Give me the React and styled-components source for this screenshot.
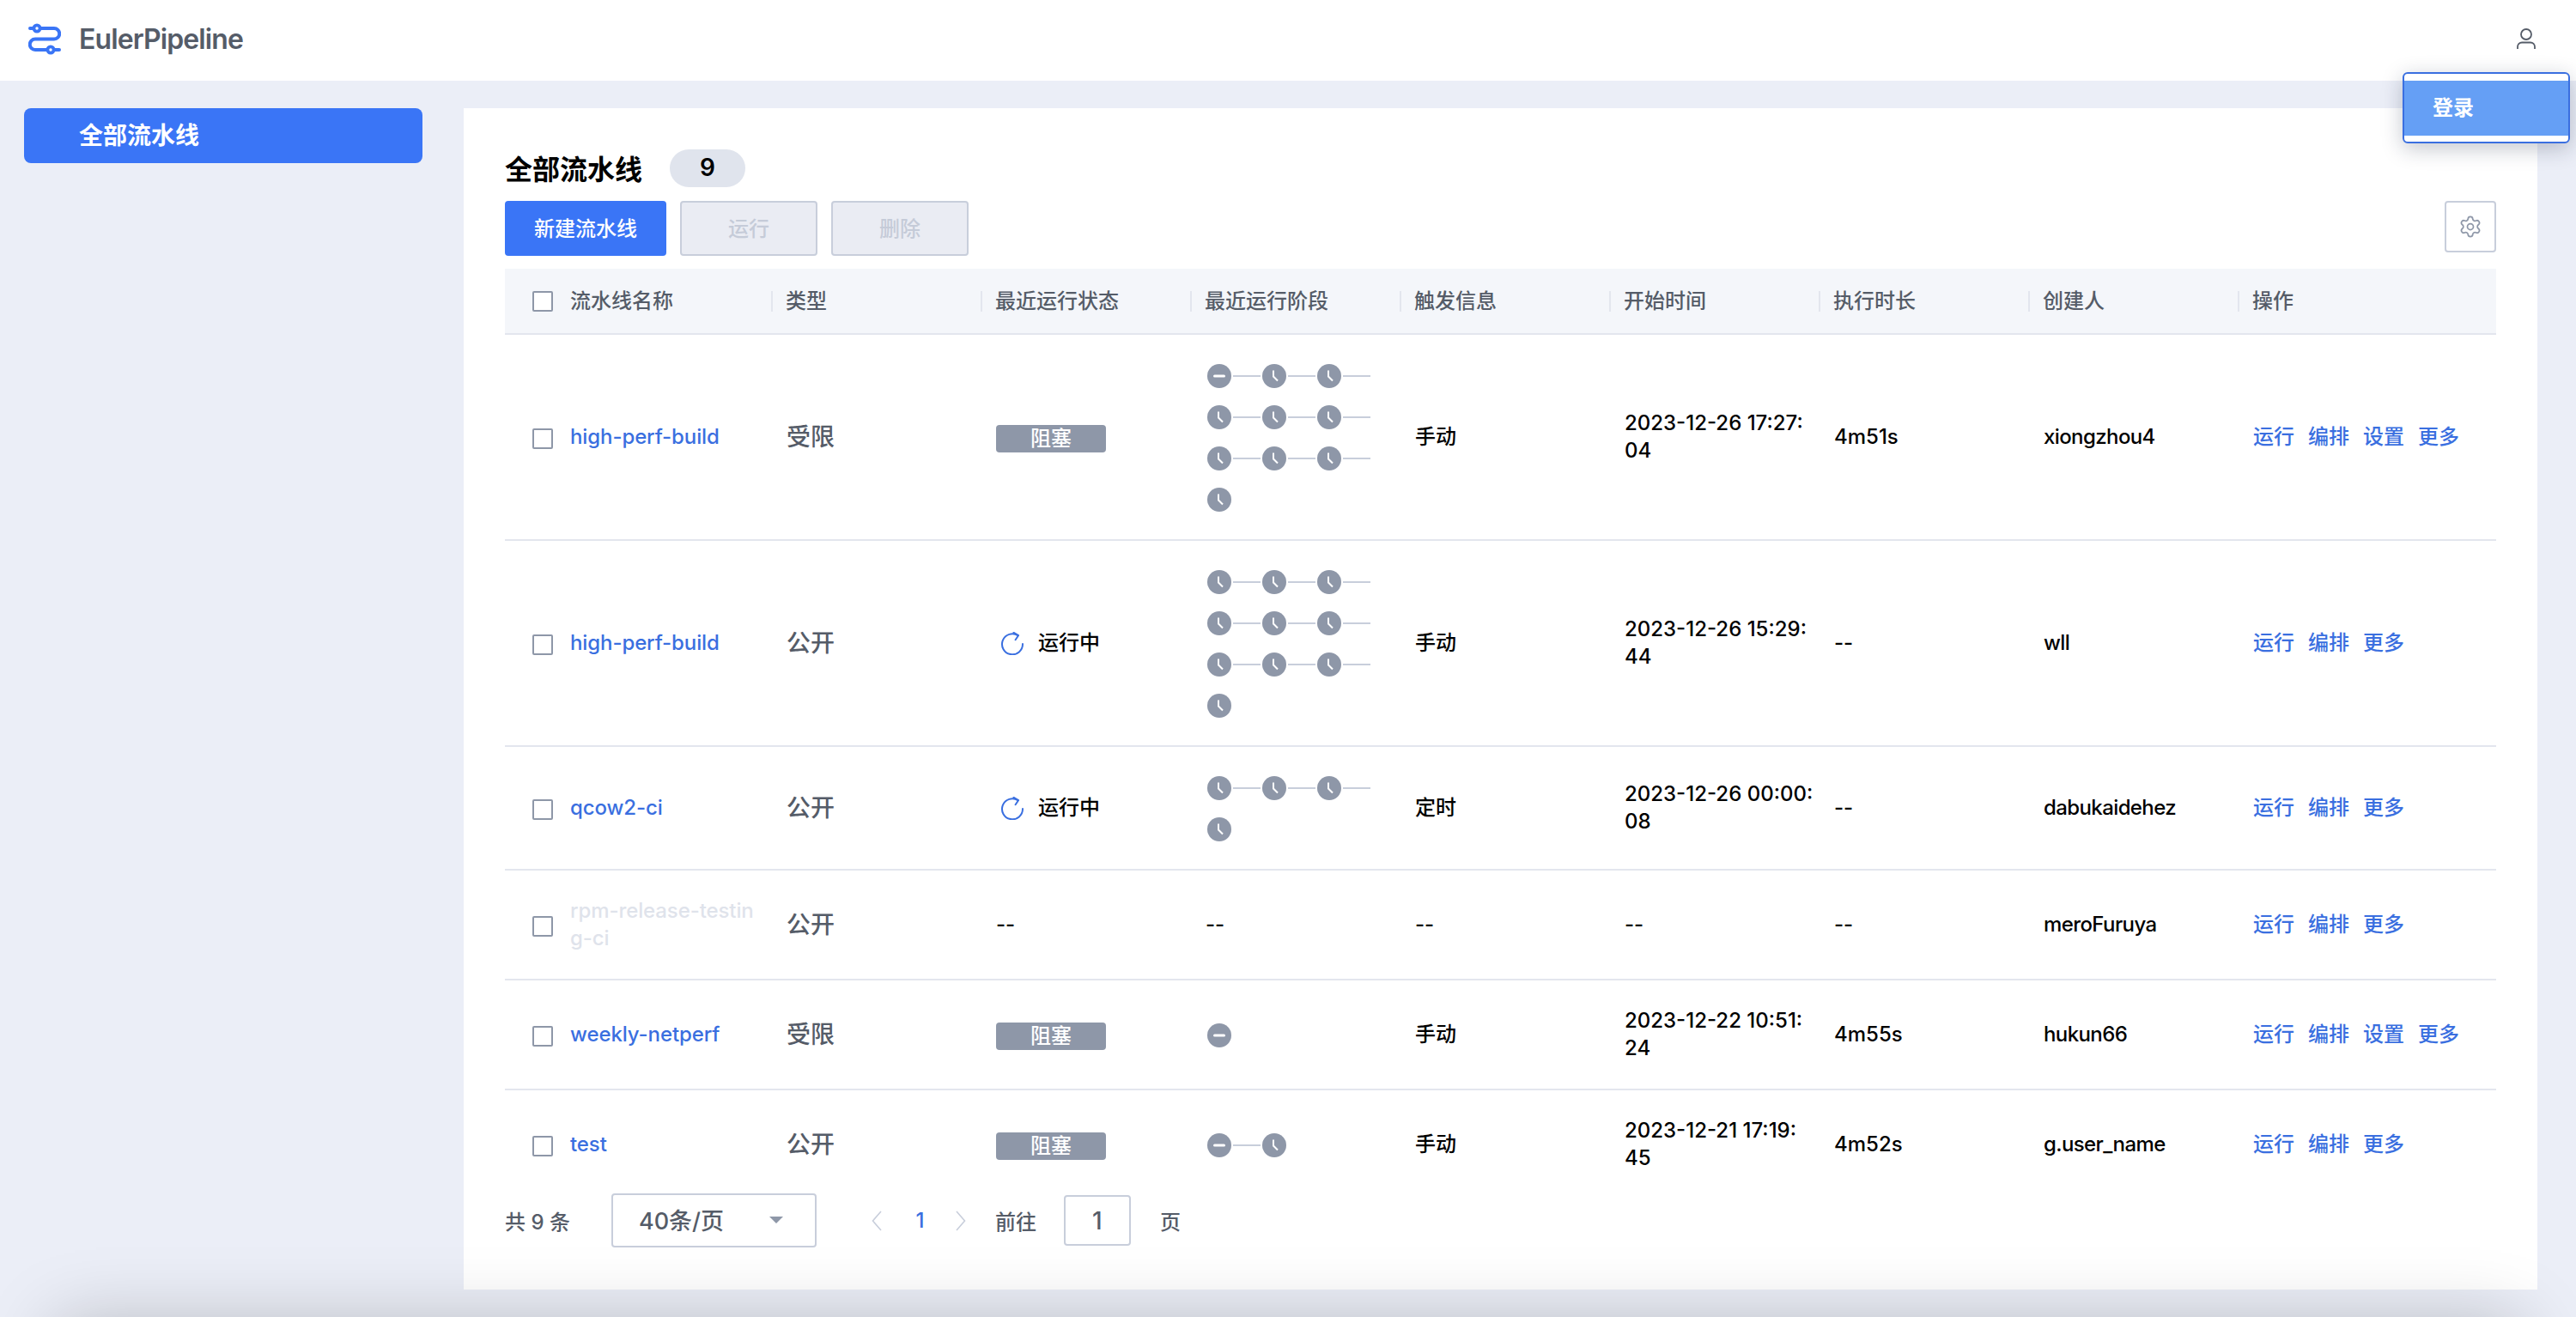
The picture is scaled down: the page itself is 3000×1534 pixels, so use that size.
import React from 'react';
import styled, { createGlobalStyle } from 'styled-components';
import { Settings } from 'lucide-react';

const Global = createGlobalStyle`
  html, body {
    margin: 0;
    height: 100%;
    overflow: hidden;
    background: #ebeef7;
    font-family: Inter, "Noto Sans CJK SC", "Noto Sans", sans-serif;
  }
  * { box-sizing: border-box; }
`;

const Page = styled.div`
  position: relative;
  height: 1534px;
  overflow: hidden;
`;

const Header = styled.header`
  height: 94px;
  background: #fff;
  display: flex;
  align-items: center;
  justify-content: space-between;
  padding: 0 47px 3px 33px;
`;

const Brand = styled.div`
  display: flex;
  align-items: center;
  gap: 21px;
  font-size: 32px;
  font-weight: 600;
  color: #555c68;
  letter-spacing: -0.9px;
`;

const Body = styled.div`
  display: flex;
  padding: 32px 45px 0 28px;
`;

const Sidebar = styled.nav`
  width: 464px;
  margin-right: 48px;
`;

const SideItem = styled.div`
  height: 64px;
  display: flex;
  align-items: center;
  padding: 0 0 5px 64px;
  border-radius: 8px;
  background: #3a75f6;
  color: #fff;
  font-size: 28px;
  font-weight: 700;
`;

const Card = styled.main`
  width: 2415px;
  height: 1376px;
  background: #fff;
  padding: 48px 48px 0;
`;

const TitleRow = styled.div`
  display: flex;
  align-items: center;
  height: 44px;
  margin-bottom: 16px;
`;

const Title = styled.h1`
  margin: 0 32px 0 0;
  padding-bottom: 3px;
  font-size: 32px;
  font-weight: 700;
  color: #000;
`;

const Count = styled.span`
  width: 88px;
  height: 44px;
  border-radius: 22px;
  background: #e0e4ed;
  display: flex;
  align-items: center;
  justify-content: center;
  padding-bottom: 2px;
  font-size: 28px;
  font-weight: 600;
  color: #000;
`;

const Toolbar = styled.div`
  display: flex;
  align-items: flex-start;
  gap: 16px;
  margin-bottom: 15px;
`;

const Button = styled.button`
  height: 64px;
  width: ${p => (p.$primary ? 188 : 160)}px;
  border-radius: 4px;
  border: ${p => (p.$primary ? 'none' : '2px solid #c8cedb')};
  background: ${p => (p.$primary ? '#3a75f6' : '#eaecf3')};
  color: ${p => (p.$primary ? '#fff' : '#c5cbd8')};
  font: 500 24px Inter, "Noto Sans CJK SC", sans-serif;
  padding: 0 0 3px;
`;

const GearButton = styled.button`
  margin-left: auto;
  width: 60px;
  height: 60px;
  border: 2px solid #c8cedb;
  border-radius: 4px;
  background: #fff;
  display: flex;
  align-items: center;
  justify-content: center;
  padding: 0;
`;

const TableClip = styled.div`
  height: 1057px;
  overflow: hidden;
`;

const columns = '310px 244px 244px 244px 244px 244px 244px 244px 1fr';

const HeadRow = styled.div`
  display: grid;
  grid-template-columns: ${columns};
  height: 77px;
  background: #f4f6fa;
  border-bottom: 2px solid #e3e6ee;
  align-items: center;
`;

const HeadCell = styled.div`
  padding-left: ${p => (p.$first ? 32 : 15)}px;
  display: flex;
  align-items: center;
  gap: 20px;
  font-size: 24px;
  font-weight: 500;
  color: #555c68;
  line-height: 32px;
  border-left: ${p => (p.$first ? 'none' : '2px solid #e3e6ee')};
  height: 24px;
`;

const Row = styled.div`
  display: grid;
  grid-template-columns: ${columns};
  min-height: 128px;
  border-bottom: 2px solid #e3e6ee;
  align-items: center;
`;

const Cell = styled.div`
  padding-left: 18px;
  padding-right: 6px;
  font-size: 24px;
  line-height: 32px;
  font-weight: 500;
  color: #000;
  word-break: break-all;
`;

const DateCell = styled(Cell)`
  padding-right: 0;
  white-space: pre;
`;

const Creator = styled(Cell)`
  letter-spacing: -0.6px;
`;

const NameCell = styled.div`
  padding-left: 32px;
  display: flex;
  align-items: center;
  gap: 20px;
`;

const Name = styled.a`
  flex: 1;
  padding-right: 20px;
  font-size: 24px;
  line-height: 32px;
  font-weight: 500;
  letter-spacing: -0.1px;
  word-break: break-all;
  color: ${p => (p.$muted ? '#dfe3eb' : '#3a6fe0')};
`;

const Check = styled.span`
  flex: none;
  width: 24px;
  height: 24px;
  border: 2px solid #8e97a8;
  border-radius: 2px;
  background: #fff;
`;

const RowCheck = styled(Check)`
  margin-top: 3px;
`;

const TypeText = styled(Cell)`
  font-size: 28px;
  color: #555c68;
`;

const Blocked = styled.span`
  display: flex;
  align-items: center;
  justify-content: center;
  margin-top: 3px;
  width: 128px;
  height: 32px;
  border-radius: 4px;
  background: #8e97a8;
  color: #fff;
  font-size: 24px;
`;

const Running = styled.span`
  display: flex;
  align-items: center;
  gap: 16px;
  padding-left: 5px;
`;

const Stages = styled.div`
  width: 192px;
  margin-left: 20px;
  padding: 24px 0 22px;
  display: flex;
  flex-wrap: wrap;
`;

const Stage = styled.div`
  width: 64px;
  height: 48px;
  display: flex;
  align-items: center;
`;

const Connector = styled.span`
  width: 32px;
  height: 2px;
  margin-left: 2px;
  background: #c8cedb;
`;

const Ops = styled(Cell)`
  display: flex;
  gap: 16px;
  color: #3a6fe0;
`;

const Pager = styled.div`
  display: flex;
  align-items: center;
  height: 63px;
  margin-top: 20px;
  font-size: 24px;
  font-weight: 500;
  color: #555c68;
`;

const Total = styled.span`
  margin-right: 48px;
`;

const PageSize = styled.div`
  width: 239px;
  height: 63px;
  border: 2px solid #c8cedb;
  border-radius: 4px;
  padding: 0 37px 2px 30px;
  display: flex;
  align-items: center;
  justify-content: space-between;
  font-size: 27px;
  margin-right: 64px;
`;

const Caret = styled.span`
  width: 0;
  height: 0;
  border-left: 8px solid transparent;
  border-right: 8px solid transparent;
  border-top: 8px solid #8e97a8;
`;

const Current = styled.span`
  width: 86px;
  padding-left: 3px;
  text-align: center;
  color: #3a6fe0;
`;

const Jump = styled.span`
  margin: 0 32px 0 34px;
`;

const PageInput = styled.div`
  width: 78px;
  height: 59px;
  border: 2px solid #c8cedb;
  border-radius: 4px;
  display: flex;
  align-items: center;
  justify-content: center;
  font-size: 28px;
  margin-right: 34px;
`;

const UserPopover = styled.div`
  position: absolute;
  top: 84px;
  left: 2798px;
  width: 195px;
  height: 83px;
  padding: 8px 0;
  background: #fff;
  border: 2px solid #3a6fe0;
  border-radius: 6px;
  box-shadow: 0 6px 24px rgba(20, 30, 60, 0.25);
`;

const PopoverItem = styled.div`
  height: 64px;
  background: #659ff5;
  color: #fff;
  font-size: 24px;
  font-weight: 700;
  display: flex;
  align-items: center;
  padding: 0 0 5px 33px;
`;

const BottomShadow = styled.div`
  position: absolute;
  left: 65px;
  right: 65px;
  top: 1540px;
  height: 300px;
  box-shadow: 0 0 80px rgba(0, 0, 0, 0.22);
  pointer-events: none;
`;

const Logo = () => (
  <svg width="38" height="38" viewBox="0 0 38 38" fill="none">
    <path d="M2 6H30a6.25 6.25 0 0 1 0 12.5H8a6.25 6.25 0 0 0 0 12.5H36" stroke="#3a75f6" strokeWidth="4" strokeLinecap="round" />
    <circle cx="10" cy="6" r="5.5" fill="#3a75f6" />
    <circle cx="10" cy="6" r="1.7" fill="#fff" />
    <circle cx="26" cy="31" r="5.5" fill="#3a75f6" />
    <circle cx="26" cy="31" r="1.7" fill="#fff" />
  </svg>
);

const UserIcon = () => (
  <svg width="22" height="25" viewBox="0 0 22 25" fill="none" stroke="#555c68" strokeWidth="1.8">
    <circle cx="11" cy="7" r="6" />
    <path d="M1 24v-2.5a5 5 0 0 1 5-5h10a5 5 0 0 1 5 5V24" />
  </svg>
);

const RunIcon = () => (
  <svg width="28" height="27" viewBox="0 0 28 27" fill="none" stroke="#3a6fe0" strokeWidth="2">
    <path d="M20.5 4.2A12 12 0 1 0 26 14" strokeLinecap="round" />
    <path d="M15.5 0.8l5.5 3.4-3.4 5" strokeLinecap="round" strokeLinejoin="round" />
  </svg>
);

const ClockIcon = () => (
  <svg width="28" height="28" viewBox="0 0 28 28">
    <circle cx="14" cy="14" r="14" fill="#8e97a8" />
    <path d="M13 7.5v7l5 5" fill="none" stroke="#fff" strokeWidth="2" />
  </svg>
);

const BlockIcon = () => (
  <svg width="28" height="28" viewBox="0 0 28 28">
    <circle cx="14" cy="14" r="14" fill="#8e97a8" />
    <path d="M8.5 14h11" fill="none" stroke="#fff" strokeWidth="3" strokeLinecap="round" />
  </svg>
);

const Chevron = ({ left }) => (
  <svg width="12" height="24" viewBox="0 0 12 24" fill="none" stroke="#c8cedb" strokeWidth="1.6">
    <path d={left ? 'M11 1L1.5 12 11 23' : 'M1 1l9.5 11L1 23'} />
  </svg>
);

const StageList = ({ total, blocked }) => (
  <Stages>
    {Array.from({ length: total }).map((_, i) => (
      <Stage key={i}>
        {blocked && i === 0 ? <BlockIcon /> : <ClockIcon />}
        {i < total - 1 && <Connector />}
      </Stage>
    ))}
  </Stages>
);

const headers = ['类型', '最近运行状态', '最近运行阶段', '触发信息', '开始时间', '执行时长', '创建人', '操作'];

const rows = [
  { name: 'high-perf-build', type: '受限', status: 'blocked', stages: 10, blocked: true, trigger: '手动', start: '2023-12-26 17:27:\n04', time: '4m51s', user: 'xiongzhou4', setting: true },
  { name: 'high-perf-build', type: '公开', status: 'running', stages: 10, trigger: '手动', start: '2023-12-26 15:29:\n44', time: '--', user: 'wll' },
  { name: 'qcow2-ci', type: '公开', status: 'running', stages: 4, trigger: '定时', start: '2023-12-26 00:00:\n08', time: '--', user: 'dabukaidehez' },
  { name: 'rpm-release-testing-ci', muted: true, type: '公开', trigger: '--', start: '--', time: '--', user: 'meroFuruya' },
  { name: 'weekly-netperf', type: '受限', status: 'blocked', stages: 1, blocked: true, trigger: '手动', start: '2023-12-22 10:51:\n24', time: '4m55s', user: 'hukun66', setting: true },
  { name: 'test', type: '公开', status: 'blocked', stages: 2, blocked: true, trigger: '手动', start: '2023-12-21 17:19:\n45', time: '4m52s', user: 'g.user_name' },
];

const renderStatus = status => {
  if (status === 'blocked') return <Blocked>阻塞</Blocked>;
  if (status === 'running') return <Running><RunIcon />运行中</Running>;
  return '--';
};

export default function App() {
  return (
    <Page>
      <Global />
      <Header>
        <Brand><Logo />EulerPipeline</Brand>
        <UserIcon />
      </Header>
      <Body>
        <Sidebar>
          <SideItem>全部流水线</SideItem>
        </Sidebar>
        <Card>
          <TitleRow>
            <Title>全部流水线</Title>
            <Count>9</Count>
          </TitleRow>
          <Toolbar>
            <Button $primary>新建流水线</Button>
            <Button disabled>运行</Button>
            <Button disabled>删除</Button>
            <GearButton><Settings size={28} color="#8e97a8" strokeWidth={1.5} /></GearButton>
          </Toolbar>
          <TableClip>
            <HeadRow>
              <HeadCell $first><Check />流水线名称</HeadCell>
              {headers.map(h => <HeadCell key={h}>{h}</HeadCell>)}
            </HeadRow>
            {rows.map((r, i) => (
              <Row key={i}>
                <NameCell><RowCheck /><Name $muted={r.muted}>{r.name}</Name></NameCell>
                <TypeText>{r.type}</TypeText>
                <Cell>{renderStatus(r.status)}</Cell>
                {r.stages ? <StageList total={r.stages} blocked={r.blocked} /> : <Cell>--</Cell>}
                <Cell>{r.trigger}</Cell>
                <DateCell>{r.start}</DateCell>
                <Cell>{r.time}</Cell>
                <Creator>{r.user}</Creator>
                <Ops>
                  <span>运行</span>
                  <span>编排</span>
                  {r.setting && <span>设置</span>}
                  <span>更多</span>
                </Ops>
              </Row>
            ))}
          </TableClip>
          <Pager>
            <Total>共 9 条</Total>
            <PageSize>40条/页<Caret /></PageSize>
            <Chevron left />
            <Current>1</Current>
            <Chevron />
            <Jump>前往</Jump>
            <PageInput>1</PageInput>
            <span>页</span>
          </Pager>
        </Card>
      </Body>
      <UserPopover><PopoverItem>登录</PopoverItem></UserPopover>
      <BottomShadow />
    </Page>
  );
}
